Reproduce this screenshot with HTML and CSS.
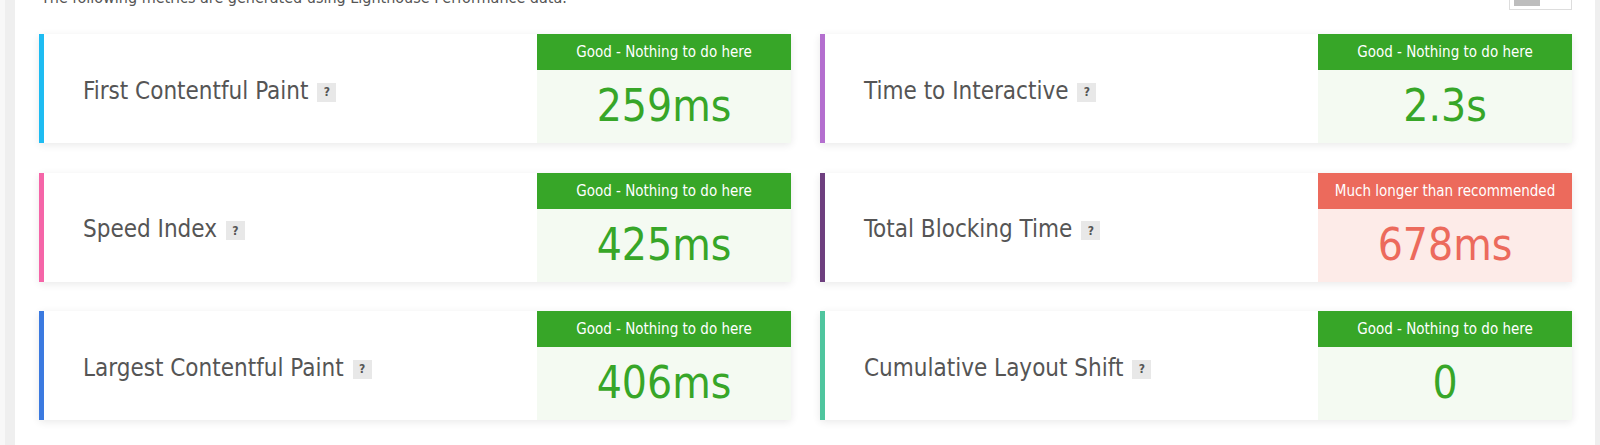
FILE: index.html
```html
<!DOCTYPE html>
<html>
<head>
<meta charset="utf-8">
<link rel="stylesheet" href="styles.css">
</head>
<body>
<div class="page">
  <div class="gutter"></div>
  <main class="content">
    <div class="intro">
      <p class="intro-text">The following metrics are generated using Lighthouse Performance data.</p>
      <div class="toggle"><span class="toggle-knob"></span></div>
    </div>
    <div class="grid">
      <div class="card c-fcp">
        <div class="label">First Contentful Paint <span class="help">?</span></div>
        <div class="status good"><div class="status-head">Good - Nothing to do here</div><div class="status-val">259ms</div></div>
      </div>
      <div class="card c-tti">
        <div class="label">Time to Interactive <span class="help">?</span></div>
        <div class="status good"><div class="status-head">Good - Nothing to do here</div><div class="status-val">2.3s</div></div>
      </div>
      <div class="card c-si">
        <div class="label">Speed Index <span class="help">?</span></div>
        <div class="status good"><div class="status-head">Good - Nothing to do here</div><div class="status-val">425ms</div></div>
      </div>
      <div class="card c-tbt">
        <div class="label">Total Blocking Time <span class="help">?</span></div>
        <div class="status bad"><div class="status-head">Much longer than recommended</div><div class="status-val">678ms</div></div>
      </div>
      <div class="card c-lcp">
        <div class="label">Largest Contentful Paint <span class="help">?</span></div>
        <div class="status good"><div class="status-head">Good - Nothing to do here</div><div class="status-val">406ms</div></div>
      </div>
      <div class="card c-cls">
        <div class="label">Cumulative Layout Shift <span class="help">?</span></div>
        <div class="status good"><div class="status-head">Good - Nothing to do here</div><div class="status-val">0</div></div>
      </div>
    </div>
  </main>
  <div class="rgutter"></div>
</div>
</body>
</html>
```
FILE: styles.css
```css
html, body { margin: 0; padding: 0; background: #fff; }
body {
  font-family: "DejaVu Sans Condensed", "DejaVu Sans", sans-serif;
  font-stretch: condensed;
  color: #555;
  overflow: hidden;
  height: 445px;
}
.page { display: flex; height: 445px; }
.gutter {
  width: 15px;
  flex: none;
  background: linear-gradient(to right, #f8f8f8 0, #f8f8f8 5px, #efefef 5px, #efefef 15px);
}
.rgutter { width: 5px; flex: none; background: #efefef; }
.content {
  flex: 1;
  padding: 0 23px 0 24px;
  min-width: 0;
}
.intro {
  display: flex;
  justify-content: space-between;
  align-items: flex-end;
  height: 24px;
  margin-top: -14px;
  margin-bottom: 24px;
}
.intro-text {
  margin: 0 0 0 2px;
  font-size: 16px;
  line-height: 20px;
  color: #555;
  padding-bottom: 2px;
}
.toggle {
  width: 63px;
  height: 22px;
  border: 1px solid #ddd;
  box-sizing: border-box;
  padding: 4px;
  display: flex;
  align-items: flex-end;
  padding-bottom: 3px;
}
.toggle-knob { width: 26px; height: 15px; background: #bdbdbd; display: block; }
.grid {
  display: grid;
  grid-template-columns: 1fr 1fr;
  column-gap: 29px;
  row-gap: 29.5px;
}
.card {
  display: flex;
  height: 109px;
  background: #fff;
  border-left: 5px solid #1ebcf2;
  box-shadow: 0 2px 8px rgba(0,0,0,0.09);
}
.c-fcp { border-left-color: #1ebcf2; }
.c-tti { border-left-color: #b46fcf; }
.c-si { border-left-color: #f565a8; }
.c-tbt { border-left-color: #6e3f7f; }
.c-lcp { border-left-color: #3b7ae0; }
.c-cls { border-left-color: #4fc59e; }
.label {
  flex: 1;
  display: flex;
  align-items: center;
  padding-left: 39px;
  padding-top: 4px;
  font-size: 24px;
  color: #555;
  white-space: nowrap;
}
.help {
  flex: none;
  display: inline-flex;
  align-items: center;
  justify-content: center;
  width: 19px;
  height: 19px;
  margin-left: 9px;
  margin-top: 3px;
  background: #e8e8e8;
  color: #555;
  font-size: 12px;
  font-weight: bold;
}
.status {
  width: 254px;
  flex: none;
  display: flex;
  flex-direction: column;
}
.status-head {
  height: 36px;
  display: flex;
  align-items: center;
  justify-content: center;
  color: #fff;
  font-size: 15px;
}
.status-val {
  flex: 1;
  display: flex;
  align-items: center;
  justify-content: center;
  font-size: 44px;
  padding-bottom: 2px;
}
.good .status-head { background: #37a628; }
.good .status-val { background: #f4faf2; color: #37a628; }
.bad .status-head { background: #ec6a5c; }
.bad .status-val { background: #fdebe8; color: #ec6a5c; }
```
